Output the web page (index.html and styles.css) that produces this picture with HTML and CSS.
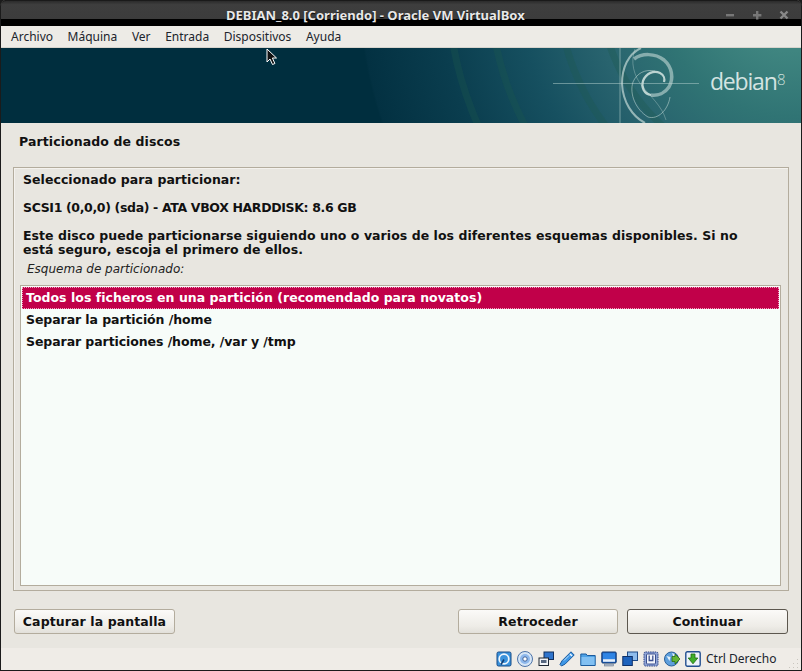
FILE: index.html
```html
<!DOCTYPE html>
<html lang="es">
<head>
<meta charset="utf-8">
<title>DEBIAN_8.0 [Corriendo] - Oracle VM VirtualBox</title>
<link rel="stylesheet" href="styles.css">
</head>
<body>
<div class="window">
  <header class="titlebar">
    <div class="title-top">
      <span class="title-text">DEBIAN_8.0 [Corriendo] - Oracle VM VirtualBox</span>
      <div class="win-controls">
        <svg width="10" height="10" viewBox="0 0 10 10"><rect x="1" y="4" width="8" height="2.4" fill="#777"/></svg>
        <svg width="10" height="10" viewBox="0 0 10 10"><path d="M1 4h3V1h2.4v3h3v2.4h-3v3H4v-3H1z" fill="#777"/></svg>
        <svg width="10" height="10" viewBox="0 0 10 10"><path d="M1.5 1.5l7 7M8.5 1.5l-7 7" stroke="#888" stroke-width="2.4"/></svg>
      </div>
    </div>
  </header>
  <nav class="menubar">
    <span>Archivo</span><span>Máquina</span><span>Ver</span><span>Entrada</span><span>Dispositivos</span><span>Ayuda</span>
  </nav>
  <main class="guest">
    <div class="banner">
      <svg class="banner-art" width="802" height="75" viewBox="0 0 802 75">
        <defs>
          <radialGradient id="bg" gradientUnits="userSpaceOnUse" cx="790" cy="-63" r="440">
            <stop offset="0.15" stop-color="#3f8580"/>
            <stop offset="0.3" stop-color="#307474"/>
            <stop offset="0.45" stop-color="#28636e"/>
            <stop offset="0.61" stop-color="#165060"/>
            <stop offset="0.8" stop-color="#0a3d4e"/>
            <stop offset="0.975" stop-color="#033142"/>
            <stop offset="0.98" stop-color="#002e3e"/>
          </radialGradient>
        </defs>
        <rect width="802" height="75" fill="url(#bg)"/>
        <g fill="none" stroke="#1f5a4c" stroke-opacity=".3" stroke-width="7">
          <circle cx="790" cy="-63" r="342"/>
          <circle cx="790" cy="-63" r="300"/>
          <circle cx="790" cy="-63" r="232"/>
          <circle cx="790" cy="-63" r="190"/>
        </g>
        <path d="M553 35.500H699" stroke="#a9c9c6" stroke-opacity=".55" stroke-width="1"/>
        <path d="M620 0V75" stroke="#a9c9c6" stroke-opacity=".4" stroke-width="1.500"/>
        <g fill="none" stroke="#c3d9d6">
          <path d="M641 0C628 6 622 20 622 36C623 54 632 68 645 75" stroke-width="2" stroke-opacity=".7"/>
          <path d="M634 11C642 5 655 5 664 12C672 19 674 30 669 39C665 45 658 48 651 47" stroke-width="3.500" stroke-opacity=".6"/>
          <path d="M651 47C644 46 641 39 643 33C646 25 654 22 660 25C664 27 665 31 664 34" stroke-width="2.200" stroke-opacity=".95"/>
          <path d="M655 23C645 21 637 25 633 34C629 46 636 62 648 69C658 72 668 62 670 49" stroke-width="1" stroke-opacity=".55"/>
          <path d="M635 1C630 14 634 28 642 38C650 48 662 58 666 72" stroke-width="1" stroke-opacity=".35"/>
        </g>
      </svg>
      <span class="debian-word">debian</span><span class="debian-num">8</span>
    </div>
    <div class="content">
      <h1 class="page-title">Particionado de discos</h1>
      <section class="frame">
        <p class="line first">Seleccionado para particionar:</p>
        <p class="line gap tight">SCSI1 (0,0,0) (sda) - ATA VBOX HARDDISK: 8.6 GB</p>
        <p class="line gap">Este disco puede particionarse siguiendo uno o varios de los diferentes esquemas disponibles. Si no está seguro, escoja el primero de ellos.</p>
        <p class="list-label">Esquema de particionado:</p>
        <ul class="listbox">
          <li class="selected">Todos los ficheros en una partición (recomendado para novatos)</li>
          <li>Separar la partición /home</li>
          <li>Separar particiones /home, /var y /tmp</li>
        </ul>
      </section>
      <div class="actions">
        <button class="btn btn-capture">Capturar la pantalla</button>
        <div class="actions-right">
          <button class="btn btn-nav">Retroceder</button>
          <button class="btn btn-nav btn-default">Continuar</button>
        </div>
      </div>
    </div>
    <svg class="cursor" width="12" height="18" viewBox="0 0 12 18"><path d="M1 1v13l3-3 2.5 5.5 2.4-1L6.4 10H10.500z" fill="#111" stroke="#fff" stroke-width="1"/></svg>
  </main>
  <footer class="statusbar">
    <svg class="ico" viewBox="0 0 16 16"><rect x="1" y="1" width="14" height="14" rx="1.500" fill="#3a92dc" stroke="#174a86"/><circle cx="8" cy="8" r="4.800" fill="none" stroke="#f0f6fc" stroke-width="1.700"/><path d="M8 8.500l-3 5" stroke="#123c70" stroke-width="1.500"/></svg>
    <svg class="ico" viewBox="0 0 16 16"><circle cx="8" cy="8" r="7.500" fill="#d7e6f6" stroke="#4d73a8"/><circle cx="8" cy="8" r="5" fill="#8eb8ec"/><circle cx="8" cy="8" r="2.200" fill="#fff" stroke="#3d6098"/></svg>
    <svg class="ico" viewBox="0 0 16 16"><rect x="6" y="1" width="9.500" height="7.500" fill="#2f74cc" stroke="#12305e"/><rect x="1" y="7" width="9.500" height="7.500" fill="#f2f4f7" stroke="#1f2733"/><rect x="3" y="9" width="5.500" height="3" fill="#56667f"/></svg>
    <svg class="ico" viewBox="0 0 16 16"><path d="M12 .8l3.200 3.200-2 2-7 7-3.700 2-1.500-1.500 2-3.700 7-7z" fill="#3f97e6" stroke="#1a5a9e"/><path d="M11.500 2.500l2 2-1 1-2-2z" fill="#f4f9fd"/><path d="M5 9.500l5-5" stroke="#bfe0f8"/></svg>
    <svg class="ico" viewBox="0 0 16 16"><path d="M.8 3h5.400l1 1.500h8V14.500H.8z" fill="#4ea2e6" stroke="#1b5a9c"/><rect x="1.500" y="6" width="13" height="8" fill="#82c0f2"/></svg>
    <svg class="ico" viewBox="0 0 16 16"><rect x=".8" y="1" width="14.400" height="11" rx="1" fill="#1c62c0" stroke="#143a72"/><rect x="2" y="2.200" width="12" height="6" fill="#2f84e4"/><rect x="2" y="8.200" width="12" height="2.600" fill="#e8f1fb"/><rect x="3.500" y="13" width="9" height="2" fill="#b4bfcd" stroke="#5d6b80" stroke-width=".5"/></svg>
    <svg class="ico" viewBox="0 0 16 16"><rect x="5.500" y="1" width="10" height="8.500" fill="#8ebcec" stroke="#1f4a86"/><rect x=".8" y="5.500" width="9.500" height="9" fill="#1e63bd" stroke="#0e3068"/></svg>
    <svg class="ico" viewBox="0 0 16 16"><rect x="1" y="1" width="14" height="14" rx="1.500" fill="#8fa4d6" stroke="#2e4486" stroke-dasharray="1.500 .8"/><rect x="3.500" y="3" width="9" height="10" rx="1" fill="#f3f5fb" stroke="#3a4f8e"/><path d="M6.200 4.500v5h3.600v-5" fill="none" stroke="#3a4f8e" stroke-width="1.300"/></svg>
    <svg class="ico" viewBox="0 0 16 16"><circle cx="7.500" cy="8" r="7" fill="#5e9fdc" stroke="#2a5f98"/><path d="M2.500 5l4 1-1 4zM8 2l3.500 1.500-2 2.500z" fill="#e3f0fb"/><path d="M8 5.500h3V3l5 5-5 5v-2.500H8z" fill="#63b536" stroke="#2c6d14" stroke-width=".8"/></svg>
    <svg class="ico" viewBox="0 0 16 16"><rect x=".8" y=".8" width="14.400" height="14.400" rx="1.500" fill="#edf3fa" stroke="#234f90" stroke-width="1.400"/><path d="M6 3h4v4h2.800L8 12.800 3.200 7H6z" fill="#3fae2a" stroke="#1f6a10" stroke-width=".8"/></svg>
    <span class="host-key">Ctrl Derecho</span>
    <svg class="grip" width="12" height="12" viewBox="0 0 12 12"><g fill="#c9c6bf"><rect x="9" y="1" width="1" height="1"/><rect x="5" y="5" width="1" height="1"/><rect x="9" y="5" width="1" height="1"/><rect x="1" y="9" width="1" height="1"/><rect x="5" y="9" width="1" height="1"/><rect x="9" y="9" width="1" height="1"/></g></svg>
  </footer>
</div>
</body>
</html>
```
FILE: styles.css
```css
* { box-sizing: border-box; }
html, body { margin: 0; padding: 0; background: #1b1b1b; }
.window {
  width: 802px; height: 671px; display: flex; flex-direction: column;
  overflow: hidden; border-radius: 6px 6px 0 0;
  border: 1px solid #1b1b1b; border-top: 0; border-bottom-width: 1px;
  background: #efece7;
}
.titlebar { height: 26px; background: #000; flex: none; margin: 0 -1px; }
.title-top {
  height: 19px; background: linear-gradient(#2b2b2b, #3e3e3e 20%, #3c3c3c);
  border-top: 1px solid #1a1a1a; border-radius: 6px 6px 0 0;
  position: relative; display: flex; align-items: flex-start; justify-content: flex-end;
}
.title-text {
  position: absolute; left: 226px; top: 5px; line-height: 18px; white-space: nowrap;
  font: 700 13px/18px "Noto Sans", sans-serif; color: #e8e8e8; text-shadow: 0 1px 1px #000;
}
.win-controls { display: flex; gap: 17px; padding: 9px 13px 0 0; }
.win-controls svg { display: block; }
.menubar {
  height: 22px; flex: none; display: flex; gap: 14.600px; padding: 0 0 0 10px; align-items: center;
  background: #edebe6; border-bottom: 1px solid #d7d4cd;
  font: 400 12px/21px "Noto Sans", sans-serif; color: #20242c;
}
.guest { height: 600px; flex: none; display: flex; flex-direction: column; background: #e8e6e0; position: relative; }
.banner { height: 75px; flex: none; position: relative; overflow: hidden; background: #012f42; }
.banner-art { position: absolute; left: -1px; top: 0; }
.debian-word {
  position: absolute; left: 709px; top: 18px;
  font: 400 23px/30px "Open Sans", sans-serif; letter-spacing: -1.200px; color: #d4e4e1;
}
.debian-num {
  position: absolute; left: 776px; top: 22px;
  font: 300 15px/18px "Open Sans", sans-serif; color: #cfe0dd;
}
.content { flex: 1; display: flex; flex-direction: column; padding: 0 13px; font-family: "DejaVu Sans", sans-serif; color: #111; }
.page-title { margin: 10px 0 0 5px; font: 700 12.500px/17px "DejaVu Sans", sans-serif; letter-spacing: .1px; height: 17px; }
.frame {
  margin: 17px -1px 0 -1px; height: 424px; border: 1px solid #b3ac9d;
  box-shadow: inset 1px 1px 0 #f4f2ee;
  padding: 0 7px 4px 6px; display: flex; flex-direction: column;
}
.line { margin: 0; padding-left: 3px; max-width: 735px; font: 700 12.500px/14px "DejaVu Sans", sans-serif; letter-spacing: .05px; }
.line.first { margin-top: 5px; }
.line.gap { margin-top: 14px; }
.line.tight { letter-spacing: -.35px; }
.list-label { margin: 4px 0 0 7px; font: italic 400 12px/17px "DejaVu Sans", sans-serif; color: #222; }
.listbox {
  list-style: none; margin: 7px 0 0 0; padding: 1px; flex: 1;
  background: #f7fcf9; border: 1px solid #b3ac9d;
}
.listbox li { height: 22px; padding-left: 3px; font: 700 12.500px/20px "DejaVu Sans", sans-serif; letter-spacing: -.08px; color: #111; border: 1px dotted transparent; }
.listbox li.selected { background: #c10049; color: #fff; border-color: #f0a0c0; letter-spacing: .03px; }
.actions { display: flex; justify-content: space-between; margin-top: 18px; }
.actions-right { display: flex; gap: 9px; }
.btn {
  height: 25px; padding: 0; border: 1px solid #b3ac9d; border-radius: 3px;
  background: linear-gradient(#fbfaf8, #eeece7 70%, #e2e0da);
  font: 700 12.500px/22px "DejaVu Sans", sans-serif; letter-spacing: .1px; color: #111;
}
.btn-capture { width: 161px; }
.btn-nav { width: 160px; }
.btn-default { width: 161px; border-color: #5c574e; }
.cursor { position: absolute; left: 265px; top: 0; }
.statusbar {
  flex: 1; display: flex; align-items: center; gap: 5px; padding: 0 0 0 495px;
  background: #efece7; position: relative;
}
.ico { width: 16px; height: 16px; display: block; flex: none; }
.host-key { font: 400 12px/16px "Noto Sans", sans-serif; color: #20242c; white-space: nowrap; }
.grip { position: absolute; right: 1px; bottom: 0; }
```
